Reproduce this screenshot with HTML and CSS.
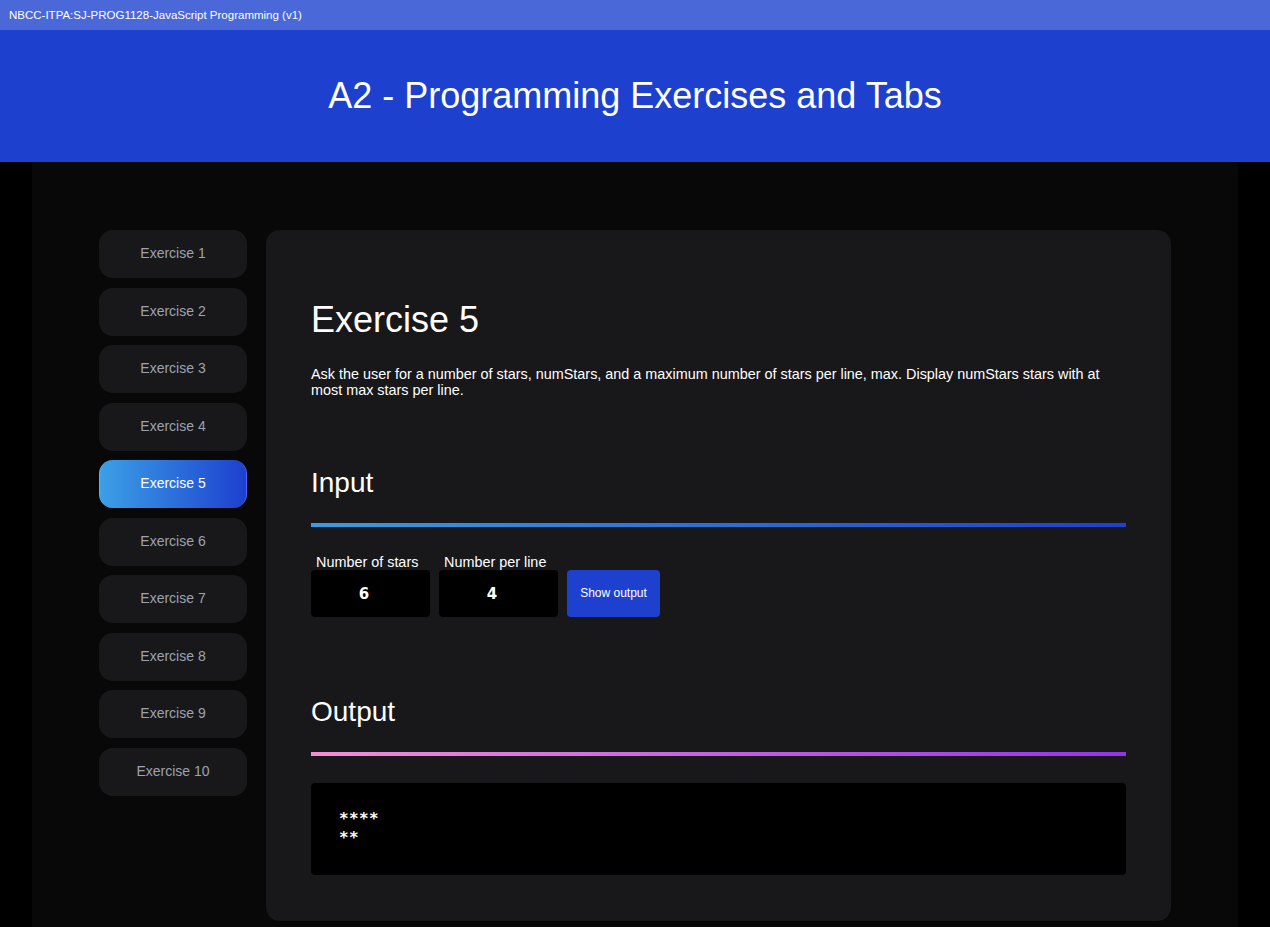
FILE: index.html
```html
<!DOCTYPE html>
<html lang="en">
<head>
<meta charset="utf-8">
<title>A2 - Programming Exercises and Tabs</title>
<link rel="stylesheet" href="styles.css">
</head>
<body>
<div class="topbar">NBCC-ITPA:SJ-PROG1128-JavaScript Programming (v1)</div>
<header class="header"><h1>A2 - Programming Exercises and Tabs</h1></header>
<div class="container">
  <nav class="tabs">
    <button class="tab">Exercise 1</button>
    <button class="tab">Exercise 2</button>
    <button class="tab">Exercise 3</button>
    <button class="tab">Exercise 4</button>
    <button class="tab active">Exercise 5</button>
    <button class="tab">Exercise 6</button>
    <button class="tab">Exercise 7</button>
    <button class="tab">Exercise 8</button>
    <button class="tab">Exercise 9</button>
    <button class="tab">Exercise 10</button>
  </nav>
  <main class="panel">
    <h2 class="ex-title">Exercise 5</h2>
    <p class="desc">Ask the user for a number of stars, numStars, and a maximum number of stars per line, max. Display numStars stars with at most max stars per line.</p>
    <h3 class="section-title">Input</h3>
    <div class="rule rule-input"></div>
    <div class="form">
      <label class="field"><span class="label">Number of stars</span><input class="num" type="text" value="6"></label>
      <label class="field"><span class="label">Number per line</span><input class="num" type="text" value="4"></label>
      <button class="show">Show output</button>
    </div>
    <h3 class="section-title output-title">Output</h3>
    <div class="rule rule-output"></div>
    <pre class="output">****
**</pre>
  </main>
</div>
</body>
</html>
```
FILE: styles.css
```css
* { box-sizing: border-box; }
html, body {
  margin: 0;
  padding: 0;
  background: #000;
  font-family: "Liberation Sans", Arial, sans-serif;
  color: #fff;
}
.topbar {
  height: 30px;
  background: #4a68d8;
  font-size: 11.5px;
  line-height: 30px;
  padding-left: 9px;
  color: #fff;
}
.header {
  height: 132px;
  background: #1d40cf;
  display: flex;
  align-items: center;
  justify-content: center;
}
.header h1 {
  margin: 0;
  font-weight: 400;
  font-size: 36px;
  color: #fff;
}
.container {
  margin: 0 32px;
  background: #080808;
  padding: 68px 67px 7px;
  display: flex;
  align-items: flex-start;
  gap: 19px;
  min-height: 765px;
}
.tabs {
  width: 148px;
  flex: none;
  display: flex;
  flex-direction: column;
  gap: 9.55px;
}
.tab {
  height: 48px;
  border: 0;
  border-radius: 14px;
  background: #18181b;
  color: #9ca3af;
  font-family: "Liberation Sans", Arial, sans-serif;
  font-size: 14px;
  line-height: 16px;
  padding: 0 0 2px;
}
.tab.active {
  background: linear-gradient(90deg, #3ba0e6 0%, #1d40cf 100%);
  color: #fff;
  border-left: 1px solid #5ab4f0;
  border-right: 1px solid #4a68ff;
}
.panel {
  flex: 1;
  background: #18181b;
  border-radius: 14px;
  padding: 45px 45px 46px;
}
.ex-title {
  margin: 24px 0 0;
  font-size: 36px;
  font-weight: 400;
  line-height: 41px;
}
.desc {
  margin: 26px 0 0;
  font-size: 14.4px;
  line-height: 16px;
}
.section-title {
  margin: 69px 0 0;
  font-size: 28px;
  font-weight: 400;
  line-height: 32px;
}
.output-title { margin-top: 79px; }
.rule {
  height: 4px;
  margin-top: 24px;
}
.rule-input { background: linear-gradient(90deg, #3b9ce0 0%, #1d40cf 100%); }
.rule-output { background: linear-gradient(90deg, #f38fd6 0%, #9333ea 100%); }
.form {
  margin-top: 28px;
  display: flex;
  align-items: flex-end;
  gap: 9px;
}
.field {
  display: flex;
  flex-direction: column;
}
.label {
  font-size: 14.4px;
  line-height: 15px;
  padding: 1px 0 0 5px;
  margin-top: -1px;
}
.num {
  width: 119px;
  height: 47px;
  background: #000;
  border: 0;
  border-radius: 4px;
  color: #fff;
  text-align: center;
  font-family: "DejaVu Sans", sans-serif;
  font-weight: 700;
  font-size: 15px;
  padding: 0 13px 0 0;
  outline: none;
}
.show {
  width: 93px;
  height: 47px;
  background: #1d40cf;
  color: #fff;
  border: 0;
  border-radius: 4px;
  font-family: "Liberation Sans", Arial, sans-serif;
  font-size: 12px;
  padding: 0 0 1px;
}
.output {
  margin: 27px 0 0;
  background: #000;
  border-radius: 4px;
  padding: 26px 28px 28px;
  font-family: "DejaVu Sans Mono", monospace;
  font-weight: 700;
  font-size: 16px;
  line-height: 19px;
  letter-spacing: 0.4px;
  color: #fff;
}
```
